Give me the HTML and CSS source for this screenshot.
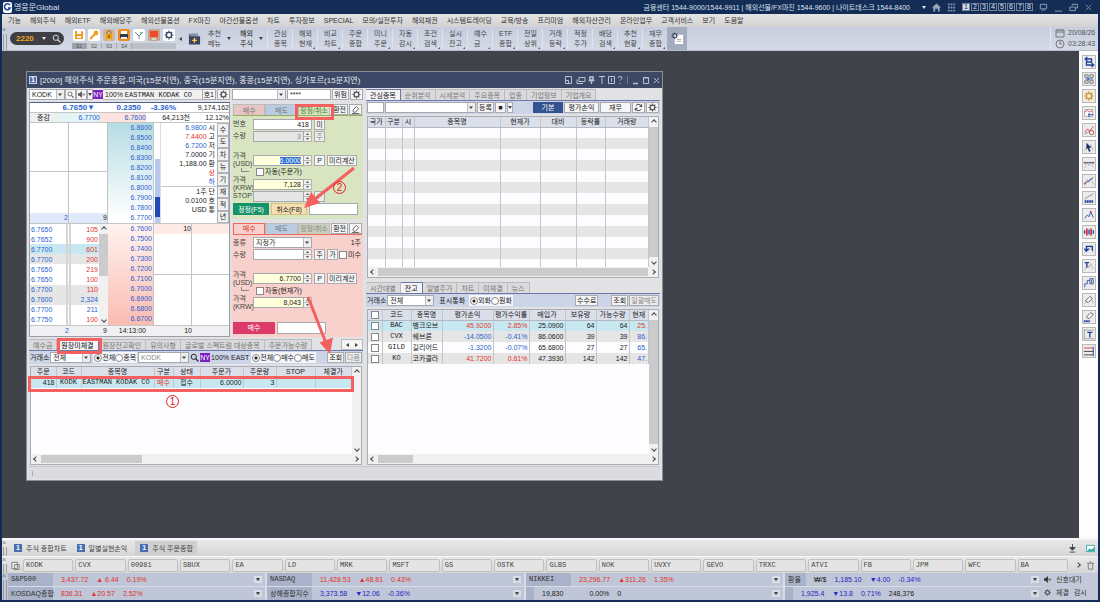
FILE: index.html
```html
<!DOCTYPE html>
<html lang="ko">
<head>
    <meta charset="utf-8">
    <title>영웅문Global</title>
    <link rel="stylesheet" href="styles.css">
</head>
<body>
<svg class="defs" aria-hidden="true">
    <symbol id="search" viewBox="0 0 9 9"><circle cx="3.8" cy="3.8" r="2.6" fill="none" stroke="currentColor"/><path d="M5.8 5.8L8.4 8.4" stroke="currentColor" stroke-width="1.3"/></symbol>
    <symbol id="gear" viewBox="0 0 10 10"><circle cx="5" cy="5" r="2.6" fill="none" stroke="currentColor" stroke-width="1.4"/><path d="M5 .5v1.6M5 7.9v1.6M.5 5h1.6M7.9 5h1.6M1.8 1.8L3 3M7 7l1.2 1.2M1.8 8.2L3 7M7 3l1.2-1.2" stroke="currentColor" stroke-width="1.2"/></symbol>
    <symbol id="speaker" viewBox="0 0 9 9"><path d="M0 3h2l3-3v9l-3-3H0z" fill="currentColor"/><path d="M6.5 3v3M8.3 3.6v2" stroke="currentColor"/></symbol>
    <symbol id="pen" viewBox="0 0 10 10"><path d="M2 6L6 1.5L8.5 4L5 8H3z" fill="#fff" stroke="currentColor"/><path d="M1 9.5h8" stroke="currentColor"/></symbol>
    <symbol id="wave" viewBox="0 0 14 14"><path d="M2 12L5 5L7 9L9 4L12 11" fill="none" stroke="#b5b5b5"/></symbol>
</svg>

<header class="titlebar">
    <svg class="logo" viewBox="0 0 9 11"><rect width="9" height="11" rx="2" fill="#fff"/><path d="M7 3.2A3 3 0 1 0 7.2 6H5" fill="none" stroke="#1b4a9c" stroke-width="1.6"/></svg>
    <h1>영웅문Global</h1>
    <span class="phones">금융센터 1544-9000/1544-9911 | 해외선물/FX마진 1544-9600 | 나이트데스크 1544-8400</span>
    <i class="caret light"></i>
    <svg class="tico" viewBox="0 0 10 10"><path d="M0 5L5 .5L10 5H8.5v4.5h-2V6.500h-3v3h-2V5z" fill="#9aa7bb"/></svg>
    <svg class="tico" viewBox="0 0 10 10"><path d="M1 1.500h8M1 5h8M1 8.500h8" stroke="#8492aa" stroke-width="2" stroke-dasharray="2 1"/></svg>
    <nav class="screens"><a class="on" href="#">1</a><a href="#">2</a><a href="#">3</a><a href="#">4</a><a href="#">5</a><a href="#">6</a><a href="#">7</a><a href="#">8</a></nav>
    <svg class="tico" viewBox="0 0 10 10"><path d="M1.500 1.500h7v5h-7zM3 9l2-2l2 2" fill="none" stroke="#9aa7bb"/></svg>
    <svg class="tico" viewBox="0 0 10 10"><path d="M1 9h8" stroke="#9aa7bb"/></svg>
    <svg class="tico" viewBox="0 0 10 10"><path d="M3.500 3V1.500h6v4H7M1 4.500h6v4H1z" fill="none" stroke="#9aa7bb"/></svg>
    <svg class="tico" viewBox="0 0 10 10"><path d="M2 2l6 6M8 2l-6 6" stroke="#8492aa"/></svg>
</header>

<nav class="menubar">
    <a href="#">기능</a><a href="#">해외주식</a><a href="#">해외ETF</a><a href="#">해외배당주</a><a href="#">해외선물옵션</a><a href="#">FX마진</a><a href="#">야간선물옵션</a><a href="#">차트</a><a href="#">투자정보</a><a href="#">SPECIAL</a><a href="#">모의/실전투자</a><a href="#">해외채권</a><a href="#">시스템트레이딩</a><a href="#">교육/방송</a><a href="#">프리미엄</a><a href="#">해외자산관리</a><a href="#">온라인업무</a><a href="#">고객서비스</a><a href="#">보기</a><a href="#">도움말</a>
</nav>

<div class="toolbar">
    <div class="grip"><span>×</span></div>
    <div class="finder"><input type="text" value="2220" aria-label="화면번호"><i class="caret light"></i><svg class="s9"><use href="#search"/></svg></div>
    <div class="quick">
        <div class="quick-icons">
            <svg viewBox="0 0 12 12"><rect width="12" height="12" rx="2" fill="#fff"/><path d="M2 2h7l1 1v7H2z" fill="#f29a1f"/><path d="M4 2h4v3H4zM4 7h4v2H4z" fill="#fff"/></svg>
            <svg viewBox="0 0 12 12"><rect width="12" height="12" rx="2" fill="#fff"/><path d="M2 10L7 5" stroke="#f29a1f" stroke-width="2"/><circle cx="8" cy="4" r="2.400" fill="#f2a22b"/></svg>
            <svg viewBox="0 0 12 12"><rect width="12" height="12" rx="2" fill="#d9b48e"/><rect x="3" y="5" width="6" height="5" fill="#f0a000"/><path d="M4 5V3.500a2 2 0 0 1 4 0V5" fill="none" stroke="#8b6a30"/><path d="M6 6v3" stroke="#5a3900"/></svg>
            <svg viewBox="0 0 12 12"><rect width="12" height="12" rx="2" fill="#f08a1d"/><path d="M3 2h6v3H3z" fill="#fff"/><path d="M2 5h8v4H2z" fill="#333c4d"/><path d="M3 8h6v2H3z" fill="#eee"/></svg>
            <svg viewBox="0 0 12 12"><rect width="12" height="12" rx="2" fill="#fff"/><path d="M2 3l4 4l4-4M6 7v3" fill="none" stroke="#7e8c91"/><circle cx="8" cy="4" r="1" fill="#55b89d"/></svg>
            <svg viewBox="0 0 12 12"><rect width="12" height="12" rx="2" fill="#cba28e"/><path d="M2 2h8v6H2z" fill="#ee4b28"/><path d="M4 10h4" stroke="#fff"/></svg>
            <svg viewBox="0 0 12 12"><rect width="12" height="12" rx="2" fill="#fff"/><g color="#3d4b68"><use href="#gear" x="1" y="1" width="10" height="10"/></g></svg>
        </div>
        <div class="quick-tabs"><span class="on">S1</span><span>S2</span><span>S3</span><span>S4</span></div>
    </div>
    <i class="caret prev"></i>
    <svg class="folder" viewBox="0 0 14 14"><path d="M1 2h5l1 2h6v9H1z" fill="#3b4660"/><path d="M2 1h9v3H2z" fill="#8592a8"/><path d="M7 6v5M4.500 8.500h5" stroke="#ffd34d" stroke-width="1.500"/></svg>
    <a class="tool wide" href="#">추천<br>메뉴</a><i class="caret"></i>
    <a class="tool wide dark" href="#">해외<br>주식</a><i class="caret"></i>
    <nav class="tools">
        <a class="tool" href="#">관심<br>종목</a><a class="tool sub" href="#">해외<br>현재</a><a class="tool sub" href="#">비교<br>차트</a><a class="tool" href="#">주문<br>종합</a><a class="tool sub" href="#">미니<br>주문</a><a class="tool sub" href="#">자동<br>감시</a><a class="tool sub" href="#">조건<br>검색</a><a class="tool sub" href="#">실시<br>잔고</a><a class="tool sub" href="#">예수<br>금</a><a class="tool sub" href="#">ETF<br>종합</a><a class="tool sub" href="#">전일<br>상위</a><a class="tool sub" href="#">거래<br>등락</a><a class="tool" href="#">적정<br>주가</a><a class="tool sub" href="#">배당<br>검색</a><a class="tool sub" href="#">추천<br>현황</a><a class="tool sub" href="#">재무<br>종합</a>
    </nav>
    <button class="custom" aria-label="툴바 설정"><svg viewBox="0 0 14 14"><path d="M4 3h9v10H4z" fill="#fff"/><path d="M6 8h5M6 10h5" stroke="#aaa"/><g color="#33405e"><use href="#gear" width="8" height="8"/></g></svg></button>
    <div class="clock">
        <span><svg viewBox="0 0 10 10"><path d="M1 2h8v7H1zM1 4h8M3 1v2M7 1v2" fill="none" stroke="#777"/></svg>20/08/26</span>
        <span><svg viewBox="0 0 10 10"><circle cx="5" cy="5" r="4" fill="none" stroke="#777"/><path d="M5 2v3h2" fill="none" stroke="#777"/></svg>03:28:43</span>
    </div>
</div>

<main class="desk">
<div class="workspace">
<section class="window">
    <div class="win-title">
        <span class="badge">1</span>
        <h2>[2000] 해외주식 주문종합-미국(15분지연), 중국(15분지연), 홍콩(15분지연), 싱가포르(15분지연)</h2>
        <svg viewBox="0 0 96 10" class="win-ctl"><g fill="none" stroke="#b9c0cf"><path d="M1.500 1.500h6v7h-6zM1.500 5.500h3v3"/><path d="M15 2.500h6v4h-6zM13 4.500v4h6"/><path d="M25 2h5M26 2v3h3V2M24.500 5.500h6M27.500 6v3" stroke-width="1.500"/><path d="M35 1.500h6M38 1.500V9"/><path d="M44.500 1.500h6v7h-6zM47.500 3v4"/><path d="M54 3q0-1.500 2-1.500t2 1.500q0 1-2 2.500M56 8v1"/><path d="M63.500 1v8" stroke="#6d7891"/><path d="M69 8.500h5" stroke-width="1.500"/><path d="M79.500 2.500h5v6h-5zM79 3h6"/><path d="M90 3l5 5M95 3l-5 5"/></g></svg>
    </div>
    <div class="win-body">
        <div class="col-left">
            <div class="trade">
                <div class="quote">
                    <div class="row search-row">
                        <select class="w36" aria-label="종목코드"><option>KODK</option></select>
                        <button class="sq" aria-label="검색"><svg class="s7"><use href="#search"/></svg></button>
                        <button class="sq" aria-label="소리"><svg class="s7"><use href="#speaker"/></svg></button>
                        <button class="thin" aria-label="소리 목록"><i class="caret"></i></button>
                        <b class="ny">NY</b>
                        <span class="stock">100% <span class="mono">EASTMAN KODAK CO</span></span>
                        <button class="sq">호1</button>
                        <button class="sq" aria-label="설정"><svg class="s9"><use href="#gear"/></svg></button>
                    </div>
                    <div class="board">
                        <div class="sum"><b class="dn c1">6.7650▼</b><b class="dn c2">0.2350</b><b class="dn c3">-3.36%</b><span class="c4">9,174,162</span></div>
                        <div class="sum second"><span class="d1">증감</span><span class="d2 dn">6.7700</span><span class="d3 dn">6.7600</span><span class="d4">64,213천</span><span class="d5">12.12%</span></div>
                        <div class="asks">
                            <div class="blank"><span>2</span></div>
                            <div class="blank"><span class="blk">9</span></div>
                            <ol class="ladder asc"><li>6.8600</li><li>6.8500</li><li>6.8400</li><li>6.8300</li><li>6.8200</li><li>6.8100</li><li>6.8000</li><li>6.7900</li><li>6.7800</li><li>6.7700</li></ol>
                            <div class="gauge"><i></i></div>
                            <div class="info">
                                <p><span class="dn">6.9800</span> 시</p><p><span class="up">7.4400</span> 고</p><p><span class="dn">6.7200</span> 저</p><p>7.0000 기</p><p>1,188.00 환</p><p class="up">상</p><p class="dn">하</p>
                                <p class="line">1주 단</p><p>0.0100 호</p><p>USD 통</p>
                            </div>
                            <nav class="side"><button>수</button><button>도</button><button>차</button><button>뉴</button><button>기</button><button>재</button><button>적</button><button>년</button></nav>
                        </div>
                        <div class="bids">
                            <table class="ticks">
                                <tr><td>6.7650</td><td class="up">105</td></tr>
                                <tr><td>6.7652</td><td class="up">900</td></tr>
                                <tr class="hi"><td>6.7700</td><td class="up">601</td></tr>
                                <tr class="gr"><td>6.7700</td><td class="up">200</td></tr>
                                <tr><td>6.7650</td><td class="up">219</td></tr>
                                <tr><td>6.7650</td><td class="up">100</td></tr>
                                <tr class="gr"><td>6.7700</td><td class="up">110</td></tr>
                                <tr class="gr"><td>6.7600</td><td>2,324</td></tr>
                                <tr><td>6.7700</td><td>211</td></tr>
                                <tr><td>6.7750</td><td class="up">100</td></tr>
                            </table>
                            <div class="vbar"><i class="arr u"></i><i class="thumb half"></i><i class="arr d"></i></div>
                            <ol class="ladder desc"><li>6.7600</li><li>6.7500</li><li>6.7400</li><li>6.7300</li><li>6.7200</li><li>6.7100</li><li>6.7000</li><li>6.6900</li><li>6.6800</li><li>6.6700</li></ol>
                            <div class="qty"><span>10</span></div>
                            <div class="qty rest"><span></span></div>
                        </div>
                        <div class="total"><span class="t1 dn">2</span><span class="t2">9</span><span class="t3">14:13:00</span><span class="t4">10</span></div>
                    </div>
                </div>

                <div class="order">
                    <div class="row search-row">
                        <select class="w54" aria-label="계좌"><option></option></select>
                        <input class="grow" type="text" value="****" aria-label="비밀번호">
                        <button class="sq">위험</button>
                        <button class="sq" aria-label="설정"><svg class="s9"><use href="#gear"/></svg></button>
                    </div>
                    <form class="ticket green">
                        <div class="ttabs"><button type="button" class="buy">매수</button><button type="button" class="sell">매도</button><button type="button" class="mod">정정/취소</button><button type="button" class="sq">환전</button><button type="button" class="sq" aria-label="지우기"><svg class="s9"><use href="#pen"/></svg></button></div>
                        <div class="frow"><label for="no">번호</label><input id="no" class="w59" type="text" value="418"><button type="button" class="sq">미</button></div>
                        <div class="frow"><label for="q1">수량</label><input id="q1" class="w50 off" type="text" value="3"><i class="spin"></i><button type="button" class="sq dim">주</button></div>
                        <div class="frow space"></div>
                        <div class="frow"><label for="p1">가격<br>(USD)</label><span class="field w50 yel"><mark>6.0000</mark></span><i class="spin"></i><button type="button" class="sq" id="p1">P</button><button type="button" class="sq">미리계산</button></div>
                        <div class="frow chk"><i class="hook"></i><input id="a1" type="checkbox"><label class="free" for="a1">자동(주문가)</label></div>
                        <div class="frow"><label for="k1">가격<br>(KRW)</label><input id="k1" class="w50 yel" type="text" value="7,128"><i class="spin"></i></div>
                        <div class="frow"><label for="s1">STOP</label><input id="s1" class="w50 off" type="text"><i class="spin"></i><button type="button" class="sq dim">P</button></div>
                        <div class="frow acts"><button type="button" class="fix">정정(F5)</button><button type="button" class="cancel">취소(F8)</button><input class="w48" type="text" aria-label="메모"></div>
                    </form>
                    <form class="ticket pink">
                        <div class="ttabs"><button type="button" class="buy cur">매수</button><button type="button" class="sell">매도</button><button type="button" class="mod gray">정정/취소</button><button type="button" class="sq">환전</button><button type="button" class="sq" aria-label="지우기"><svg class="s9"><use href="#pen"/></svg></button></div>
                        <div class="frow"><label for="kind">종류</label><select id="kind" class="w59"><option>지정가</option></select><span class="unit">1주</span></div>
                        <div class="frow"><label for="q2">수량</label><input id="q2" class="w50" type="text"><i class="spin"></i><button type="button" class="sq">주</button><button type="button" class="sq">가</button><input id="ms" type="checkbox"><label class="free" for="ms">미수</label></div>
                        <div class="frow space"></div>
                        <div class="frow"><label for="p2">가격<br>(USD)</label><input id="p2" class="w50 yel" type="text" value="6.7700"><i class="spin"></i><button type="button" class="sq">P</button><button type="button" class="sq">미리계산</button></div>
                        <div class="frow chk"><i class="hook"></i><input id="a2" type="checkbox"><label class="free" for="a2">자동(현재가)</label></div>
                        <div class="frow"><label for="k2">가격<br>(KRW)</label><input id="k2" class="w50 yel" type="text" value="8,043"><i class="spin"></i></div>
                        <div class="frow space"></div>
                        <div class="frow acts"><button type="button" class="submit">매수</button><input class="w48" type="text" aria-label="메모"></div>
                    </form>
                </div>
            </div>

            <div class="panel pending">
                <nav class="tabs"><button>예수금</button><button class="cur">원장미체결</button><button>원장잔고확인</button><button>유의사항</button><button>글로벌 스펙트럼 대상종목</button><button>주문가능수량</button><span class="pager"><i class="caret prev"></i><i class="caret next"></i></span></nav>
                <div class="filter">
                    <label for="ex1">거래소</label><select id="ex1" class="w41"><option>전체</option></select>
                    <span class="radios"><input type="radio" name="r1" id="r1a" checked><label for="r1a">전체</label><input type="radio" name="r1" id="r1b"><label for="r1b">종목</label></span>
                    <select class="w50 ghost" aria-label="종목"><option>KODK</option></select>
                    <svg class="s9"><use href="#search"/></svg><b class="ny">NY</b><span>100% EAST</span>
                    <span class="radios"><input type="radio" name="r2" id="r2a" checked><label for="r2a">전체</label><input type="radio" name="r2" id="r2b"><label for="r2b">매수</label><input type="radio" name="r2" id="r2c"><label for="r2c">매도</label></span>
                    <button class="sq push">조회</button><button class="sq dim">다음</button>
                </div>
                <div class="grid-box">
                    <div class="grid-main">
                        <table class="list">
                            <colgroup><col class="k25"><col class="k25"><col class="k73"><col class="k18"><col class="k27"><col class="k43"><col class="k33"><col class="k39"><col></colgroup>
                            <thead><tr><th>주문</th><th>코드</th><th>종목명</th><th>구분</th><th>상태</th><th>주문가</th><th>주문량</th><th>STOP</th><th>체결가</th></tr></thead>
                            <tbody><tr class="hi"><td class="num">418</td><td class="mono ctr">KODK</td><td class="mono">EASTMAN KODAK CO</td><td class="up ctr">매수</td><td class="ctr">접수</td><td class="num">6.0000</td><td class="num">3</td><td></td><td></td></tr></tbody>
                        </table>
                    </div>
                    <div class="vbar"><i class="arr u"></i><i class="arr d"></i></div>
                    <div class="hbar"><i class="arr l"></i><i class="thumb h100"></i><i class="arr r"></i></div>
                </div>
            </div>
        </div>

        <div class="col-right">
            <div class="panel watch">
                <nav class="tabs"><button class="cur">관심종목</button><button>순위분석</button><button>시세분석</button><button>주요종목</button><button>업종</button><button>기업정보</button><button>기업개요</button></nav>
                <div class="filter">
                    <input class="w17" type="text" aria-label="그룹번호"><select class="w90" aria-label="관심그룹"><option></option></select><button class="sq">등록</button><button class="sq">■</button><button class="thin" aria-label="목록"><i class="caret"></i></button>
                    <button class="sq primary push">기본</button><button class="sq w34">평가손익</button><button class="sq w30">재무</button><button class="sq" aria-label="새로고침"><svg class="s9" viewBox="0 0 10 10"><path d="M8.500 4A3.600 3.600 0 0 0 2 3.200M1.500 6A3.600 3.600 0 0 0 8 6.800M8.500 1.500V4H6M1.500 8.500V6H4" fill="none" stroke="#333"/></svg></button><button class="sq" aria-label="설정"><svg class="s9"><use href="#gear"/></svg></button>
                </div>
                <div class="grid-box">
                    <div class="grid-main">
                        <table class="list tall">
                            <colgroup><col class="k17"><col class="k17"><col class="k12"><col class="k86"><col class="k40"><col class="k36"><col class="k29"><col></colgroup>
                            <thead><tr><th>국가</th><th>구분</th><th>시</th><th>종목명</th><th>현재가</th><th>대비</th><th>등락률</th><th>거래량</th></tr></thead>
                            <tbody>
                                <tr><td></td><td></td><td></td><td></td><td></td><td></td><td></td><td></td></tr>
                                <tr><td></td><td></td><td></td><td></td><td></td><td></td><td></td><td></td></tr>
                                <tr><td></td><td></td><td></td><td></td><td></td><td></td><td></td><td></td></tr>
                                <tr><td></td><td></td><td></td><td></td><td></td><td></td><td></td><td></td></tr>
                                <tr><td></td><td></td><td></td><td></td><td></td><td></td><td></td><td></td></tr>
                                <tr><td></td><td></td><td></td><td></td><td></td><td></td><td></td><td></td></tr>
                                <tr><td></td><td></td><td></td><td></td><td></td><td></td><td></td><td></td></tr>
                                <tr><td></td><td></td><td></td><td></td><td></td><td></td><td></td><td></td></tr>
                                <tr><td></td><td></td><td></td><td></td><td></td><td></td><td></td><td></td></tr>
                                <tr><td></td><td></td><td></td><td></td><td></td><td></td><td></td><td></td></tr>
                                <tr><td></td><td></td><td></td><td></td><td></td><td></td><td></td><td></td></tr>
                                <tr><td></td><td></td><td></td><td></td><td></td><td></td><td></td><td></td></tr>
                                <tr><td></td><td></td><td></td><td></td><td></td><td></td><td></td><td></td></tr>
                            </tbody>
                        </table>
                    </div>
                    <div class="vbar"><i class="arr u"></i><i class="thumb full"></i><i class="arr d"></i></div>
                    <div class="hbar"><i class="arr l"></i><i class="thumb full"></i><i class="arr r"></i></div>
                </div>
            </div>

            <div class="panel balance">
                <nav class="tabs"><button>시간대별</button><button class="cur">잔고</button><button>일별주가</button><button>차트</button><button>미체결</button><button>뉴스</button></nav>
                <div class="filter">
                    <label for="ex2">거래소</label><select id="ex2" class="w45"><option>전체</option></select>
                    <span class="cap">표시통화</span>
                    <span class="radios"><input type="radio" name="r3" id="r3a" checked><label for="r3a">외화</label><input type="radio" name="r3" id="r3b"><label for="r3b">원화</label></span>
                    <button class="sq push">수수료</button><button class="sq ask">조회</button><button class="sq dim">일괄매도</button>
                </div>
                <div class="grid-box">
                    <div class="grid-main">
                        <table class="list striped">
                            <colgroup><col class="k13"><col class="k29"><col class="k31"><col class="k51"><col class="k36"><col class="k36"><col class="k31"><col class="k33"><col></colgroup>
                            <thead><tr><th><input type="checkbox" aria-label="전체 선택"></th><th>코드</th><th>종목명</th><th>평가손익</th><th>평가수익률</th><th>매입가</th><th>보유량</th><th>가능수량</th><th>현재</th></tr></thead>
                            <tbody>
                                <tr class="hi"><td><input type="checkbox" aria-label="BAC"></td><td class="mono ctr">BAC</td><td>뱅크오브</td><td class="num up">45.9200</td><td class="num up">2.85%</td><td class="num">25.0900</td><td class="num">64</td><td class="num">64</td><td class="num up">25.</td></tr>
                                <tr><td><input type="checkbox" aria-label="CVX"></td><td class="mono ctr">CVX</td><td>쉐브론</td><td class="num dn">-14.0500</td><td class="num dn">-0.41%</td><td class="num">86.0600</td><td class="num">39</td><td class="num">39</td><td class="num dn">86.</td></tr>
                                <tr><td><input type="checkbox" aria-label="GILD"></td><td class="mono ctr">GILD</td><td>길리어드</td><td class="num dn">-1.3200</td><td class="num dn">-0.07%</td><td class="num">65.6800</td><td class="num">27</td><td class="num">27</td><td class="num dn">65.</td></tr>
                                <tr><td><input type="checkbox" aria-label="KO"></td><td class="mono ctr">KO</td><td>코카콜라</td><td class="num up">41.7200</td><td class="num up">0.61%</td><td class="num">47.3930</td><td class="num">142</td><td class="num">142</td><td class="num dn">47.</td></tr>
                            </tbody>
                        </table>
                    </div>
                    <div class="vbar"><i class="arr u"></i><i class="thumb full"></i><i class="arr d"></i></div>
                    <div class="hbar"><i class="arr l"></i><i class="thumb h35"></i><i class="arr r"></i></div>
                </div>
            </div>
        </div>
    </div>
    <div class="win-status"></div>

    <svg class="marks" viewBox="0 0 637 410" aria-hidden="true">
        <g fill="none" stroke="#f4605f" stroke-width="3"><path d="M269.500 33.500h36v13h-36zM31.500 267.500h42v13h-42zM2.500 305.500h323v13h-323z"/><path d="M327 96L288 127M281 225L299 271"/></g>
        <path d="M277 136L284 120L293 131zM303 282L292.500 270.500L306 265.500z" fill="#f4605f"/>
    </svg>
    <span class="step one">1</span><span class="step two">2</span>
</section>
</div>

<aside class="drawbar">
    <button aria-label="이동"><svg viewBox="0 0 14 14"><path d="M3 3.500h7v3.500H4v3.500h8M5 1L2.500 3.500L5 6M10 8l2.500 2.500L10 13" fill="none" stroke="#1d3f9c" stroke-width="1.500"/></svg></button>
    <button aria-label="정렬"><svg viewBox="0 0 14 14"><path d="M2 2h4v3H2zM8 2h4v3H8zM2 9h4v3H2zM8 9h4v3H8z" fill="#ddd" stroke="#777"/><path d="M3 7h9M6 5v4" stroke="#1d3f9c"/></svg></button>
    <button class="gold" aria-label="설정"><svg viewBox="0 0 14 14"><use href="#gear" x="1" y="1" width="12" height="12"/></svg></button>
    <button aria-label="수식"><svg viewBox="0 0 14 14"><path d="M2 3h9v8H2z" fill="#fff" stroke="#aaa"/><path d="M2 6l3-2l3 2l3-2" stroke="#d44" fill="none"/><path d="M6 9h6M7 7v5" stroke="#1d3f9c"/></svg></button>
    <button aria-label="지표 추가"><svg viewBox="0 0 14 14"><path d="M2 10l3-4l3 2l4-5" fill="none" stroke="#d33"/><path d="M2 12l5-3" stroke="#888"/><circle cx="10" cy="10" r="2.500" fill="#fff" stroke="#a33"/></svg></button>
    <button aria-label="선택"><svg viewBox="0 0 14 14"><use href="#wave"/><path d="M4 2l6 6H7l2 4l-2 .5l-1.500-4L4 10z" fill="#1c2e6b"/></svg></button>
    <button aria-label="수평선"><svg viewBox="0 0 14 14"><use href="#wave"/><path d="M1 5.500h12" stroke="#1d3f9c"/><circle cx="2" cy="5.500" r="1" fill="#d33"/><circle cx="12" cy="5.500" r="1" fill="#d33"/></svg></button>
    <button aria-label="추세선"><svg viewBox="0 0 14 14"><use href="#wave"/><path d="M2 10L12 3" stroke="#1d3f9c"/><circle cx="2" cy="10" r="1" fill="#d33"/></svg></button>
    <button aria-label="자동추세"><svg viewBox="0 0 14 14"><path d="M2 8L12 2" stroke="#888"/><path d="M2 11h10" stroke="#1d3f9c" stroke-width="3" stroke-dasharray="2 .6"/></svg></button>
    <button aria-label="파동"><svg viewBox="0 0 14 14"><path d="M2 11L5 7L7 9L9 3L12 10" fill="none" stroke="#2a49a8"/><circle cx="9" cy="3" r="1" fill="#d33"/></svg></button>
    <button aria-label="봉"><svg viewBox="0 0 14 14"><path d="M2 5v4M12 5v4M7 4v6" stroke="#1d3f9c" stroke-width="1.500"/><path d="M4.500 3v8M9.500 3v8" stroke="#d33" stroke-width="2"/></svg></button>
    <button aria-label="되돌리기"><svg viewBox="0 0 14 14"><use href="#wave"/><path d="M4 9V4h7v5M1.500 6.500L4 9.500L6.500 6.500" fill="none" stroke="#1d3f9c" stroke-width="1.500"/></svg></button>
    <button aria-label="문자"><svg viewBox="0 0 14 14"><use href="#wave"/><path d="M2 3h5M4.500 3v6" stroke="#1d3f9c" stroke-width="1.500"/></svg></button>
    <button aria-label="구간"><svg viewBox="0 0 14 14"><path d="M2 12V8h3V4h3M8 2h4v6H8z" fill="none" stroke="#2a49a8"/><path d="M10 3v4" stroke="#555"/></svg></button>
    <button aria-label="지우개"><svg viewBox="0 0 14 14"><use href="#wave"/><path d="M3 8l5-5l3 2l-5 5z" fill="#fff" stroke="#555"/></svg></button>
    <button aria-label="전체 지우기"><svg viewBox="0 0 14 14"><path d="M4 7l5-5l3 2l-5 5z" fill="#fff" stroke="#555"/><path d="M1 12h7" stroke="#1d3f9c" stroke-width="2.500" stroke-dasharray="2 .6"/></svg></button>
    <button aria-label="표"><svg viewBox="0 0 14 14"><path d="M1 2.500h12M1 12.500h12M1.500 2v11" stroke="#999"/><path d="M5 5h6M8 5v6" stroke="#1d3f9c" stroke-width="1.500"/></svg></button>
    <button aria-label="분할선"><svg viewBox="0 0 14 14"><path d="M1 3.500h11" stroke="#d33"/><path d="M1 7.500h11M1 11.500h11" stroke="#333"/><path d="M12 2v11" stroke="#1d3f9c"/></svg></button>
</aside>
</main>

<div class="bar opened">
    <div class="grip"><span>×</span></div>
    <a href="#"><span class="badge">1</span>주식 종합차트</a><a href="#"><span class="badge">1</span>일별실현손익</a><a class="on" href="#"><span class="badge">1</span>주식 주문종합</a>
    <svg class="tico push" viewBox="0 0 10 10"><path d="M5 0v5M2 4l3 3l3-3zM2 9h6" fill="#444" stroke="#444"/></svg>
    <svg class="tico" viewBox="0 0 10 10"><path d="M.5 1.500h9v7h-9z" fill="#fff" stroke="#3aa"/><path d="M1 8l3-3l2 1l3-2v4z" fill="#2fb0a0"/></svg>
</div>

<div class="bar tickers">
    <div class="grip"><span>×</span></div>
    <svg class="tico" viewBox="0 0 10 10"><path d="M1 1.500h6v7H1zM4 4h5v5.500H4z" fill="#eee" stroke="#777"/></svg>
    <nav><a href="#">KODK</a><a href="#">CVX</a><a href="#">00981</a><a href="#">SBUX</a><a href="#">EA</a><a href="#">LD</a><a href="#">MRK</a><a href="#">MSFT</a><a href="#">GS</a><a href="#">OSTK</a><a href="#">GLBS</a><a href="#">NOK</a><a href="#">UVXY</a><a href="#">GEVO</a><a href="#">TRXC</a><a href="#">ATVI</a><a href="#">FB</a><a href="#">JPM</a><a href="#">WFC</a><a href="#">BA</a></nav>
    <i class="arr r"></i>
    <svg class="tico" viewBox="0 0 10 10"><path d="M1 2.500h8M2.500 2.500v6.500h5V2.500M4 1h2" fill="none" stroke="#777"/></svg>
</div>

<footer class="indices">
    <div class="grip"><span>×</span></div>
    <div class="index-grid">
        <div class="idx up"><span class="name mono">S&amp;P500</span><span>3,437.72</span><span>▲ 6.44</span><span>0.19%</span><i class="caret"></i></div>
        <div class="idx up"><span class="name mono">NASDAQ</span><span>11,428.53</span><span>▲48.81</span><span>0.43%</span><i class="caret"></i></div>
        <div class="idx up"><span class="name mono">NIKKEI</span><span>23,296.77</span><span>▲311.26</span><span>1.35%</span><i class="caret"></i></div>
        <div class="idx fall"><span class="name short">환율</span><span class="blk">₩/$</span><span>1,185.10</span><span>▼4.00</span><span>-0.34%</span><i class="caret"></i></div>
        <div class="idx up"><span class="name">KOSDAQ종합</span><span>836.31</span><span>▲20.57</span><span>2.52%</span><i class="caret"></i></div>
        <div class="idx fall"><span class="name">상해종합지수</span><span>3,373.58</span><span>▼12.06</span><span>-0.36%</span><i class="caret"></i></div>
        <div class="idx far"><span class="name none"></span><span>19,830</span><span class="mid">0.00%</span><span>0</span><i class="caret"></i></div>
        <div class="idx fall"><span class="name none"></span><span>1,925.4</span><span>▼13.8</span><span>0.71%</span><span class="blk">248,376</span><i class="caret"></i></div>
    </div>
    <div class="signals">
        <a href="#"><svg class="s7"><use href="#speaker"/></svg>신호대기</a>
        <div><svg class="s7"><use href="#gear"/></svg><a href="#">체결</a><a href="#">감시</a></div>
    </div>
</footer>
</body>
</html>
```
FILE: styles.css
```css
*{ box-sizing: border-box; }

html,body{
    margin: 0;
    padding: 0;
    height: 100%;
}

body{
    display: flex;
    flex-direction: column;
    padding: 0 2px 2px;
    background: #142d57;
    color: #222;
    font: 7px/9px "Liberation Sans", "Noto Sans CJK KR", sans-serif;
    overflow: hidden;
    cursor: default;
}

h1,h2,p,ol{ margin: 0; padding: 0; font-size: inherit; font-weight: normal; list-style: none; }
a{ color: inherit; text-decoration: none; }
i{ font-style: normal; }
svg{ display: block; flex: none; }
button,input,select{
    margin: 0;
    padding: 0;
    font: inherit;
    color: inherit;
    border-radius: 0;
    outline: none;
}
.defs{ position: absolute; width: 0; height: 0; }
.s9{ width: 9px; height: 9px; }
.s7{ width: 7px; height: 7px; }
.up{ color: #e0352b; }
.dn{ color: #2b5fd0; }
.blk{ color: #222 !important; }
.mono{ font-family: "Liberation Mono", "Noto Sans CJK KR", monospace; }
.push{ margin-left: auto !important; }

.caret{
    flex: none;
    width: 0;
    height: 0;
    border: 2px solid transparent;
    border-top: 3px solid #444;
    border-bottom: 0;
}
.caret.light{ border-top-color: #e4e8ee; }
.caret.prev{ border: 2px solid transparent; border-right: 3px solid #444; border-left: 0; }
.caret.next{ border: 2px solid transparent; border-left: 3px solid #444; border-right: 0; }

.grip{
    flex: none;
    width: 6px;
    align-self: stretch;
    line-height: 6px;
    color: #777;
    background: linear-gradient(#999,#999) 1px 7px / 1px 100% no-repeat, linear-gradient(#999,#999) 4px 7px / 1px 100% no-repeat;
}

/* top bars */
.titlebar{
    flex: none;
    display: flex;
    align-items: center;
    gap: 6px;
    height: 14px;
    padding: 0 5px 0 1px;
    color: #dce2ec;
}
.titlebar .logo{ width: 9px; height: 11px; }
.titlebar h1{ margin-left: -4px; font-size: 8px; }
.phones{ margin-left: auto; padding-right: 6px; }
.tico{ width: 9px; height: 9px; }
.screens{ display: flex; gap: 1px; }
.screens a{
    width: 8px;
    height: 8px;
    border: 1px solid #76849d;
    line-height: 6px;
    text-align: center;
}
.screens .on{ background: #d5dae3; color: #142d57; }

.menubar{
    flex: none;
    display: flex;
    align-items: center;
    gap: 9px;
    height: 13px;
    padding-left: 6px;
    background: linear-gradient(#e4e4e4,#d2d2d2);
    color: #333;
    white-space: nowrap;
}

.toolbar{
    flex: none;
    display: flex;
    align-items: center;
    height: 24px;
    background: linear-gradient(#c6cddd,#d5dae6);
    border-bottom: 1px solid #b9bfca;
    color: #444;
}
.finder{
    display: flex;
    align-items: center;
    gap: 6px;
    width: 54px;
    height: 13px;
    margin-left: 2px;
    padding-left: 4px;
    border-radius: 7px;
    background: #3d3f45;
    color: #ddd;
}
.finder input[type=text]{
    width: 22px;
    border: 0;
    background: none;
    color: #f5a623;
    font-weight: bold;
    font-size: 8px;
}
.quick{ margin-left: 8px; width: 104px; }
.quick-icons{ display: flex; gap: 3px; padding-left: 1px; }
.quick-icons svg{ width: 12px; height: 12px; }
.quick-tabs{
    display: flex;
    margin-top: 2px;
    background: #bcc0c8;
    color: #555;
    font-size: 5px;
    line-height: 6px;
}
.quick-tabs span{ width: 15px; text-align: center; border-right: 1px solid #aaa; background: #c9ccd4; }
.quick-tabs .on{ background: #9ea2ac; }
.toolbar > .prev{ margin: 0 6px 0 3px; }
.folder{ width: 13px; height: 14px; }
.tool{
    position: relative;
    width: 25px;
    line-height: 10px;
    padding-left: 6px;
    border-left: 1px solid #dfe3ec;
    white-space: nowrap;
}
.tool.wide{ width: 22px; border: 0; padding-left: 7px; margin-right: 4px; }
.tool.wide.dark{ color: #111; margin-left: 2px; }
.tool.sub::after{
    content: "";
    position: absolute;
    right: 2px;
    bottom: 0;
    border: 1px solid transparent;
    border-right-color: #555;
    border-bottom-color: #555;
}
.tools{ display: flex; margin-left: 4px; }
.custom{
    display: grid;
    place-items: center;
    width: 20px;
    height: 23px;
    border: 0;
    background: #a3adbf;
}
.custom svg{ width: 13px; height: 13px; }
.clock{ margin-left: auto; width: 48px; height: 23px; border-left: 1px solid #e8ebf1; color: #555; }
.clock span{ display: flex; align-items: center; gap: 3px; height: 11px; padding-left: 4px; }
.clock svg{ width: 10px; height: 10px; }

/* desktop */
.desk{ flex: 1; display: flex; min-height: 0; }
.workspace{ position: relative; flex: 1; background: #40434a; }
.drawbar{
    display: flex;
    flex-direction: column;
    align-items: center;
    gap: 3px;
    width: 19px;
    padding-top: 4px;
    background: #fdfdfd;
}
.drawbar button{ width: 14px; height: 14px; border: 1px solid #b9b9b9; background: #ececec; }
.drawbar svg{ width: 12px; height: 12px; }
.drawbar .gold{ color: #d39a2a; }

.window{
    position: absolute;
    left: 24px;
    top: 20px;
    display: flex;
    flex-direction: column;
    width: 637px;
    height: 410px;
    border: 1px solid #8a8d94;
    background: #e2e2e4;
}
.win-title{
    flex: none;
    display: flex;
    align-items: center;
    height: 16px;
    padding: 0 2px;
    background: #3c4866;
    color: #e6e9ef;
}
.win-title h2{ margin-left: 3px; font-size: 8px; }
.win-ctl{ width: 96px; height: 10px; margin-left: auto; }
.badge{
    flex: none;
    width: 8px;
    height: 8px;
    background: #4a6cb3;
    color: #fff;
    font-weight: bold;
    line-height: 8px;
    text-align: center;
}
.win-title .badge{ border: 1px solid #cfd6e6; line-height: 6px; }
.win-body{ flex: 1; display: flex; gap: 3px; min-height: 0; padding: 1px 2px; }
.col-left{ display: flex; flex-direction: column; gap: 2px; width: 334px; }
.col-right{ flex: 1; display: flex; flex-direction: column; gap: 4px; min-width: 0; }
.win-status{
    height: 13px;
    margin: 0 2px 1px;
    background: linear-gradient(#aaa,#aaa) 3px 4px / 1px 5px no-repeat #dcdce0;
    border-top: 1px solid #c8c8cc;
}

/* small controls */
.sq,.thin{
    display: flex;
    align-items: center;
    justify-content: center;
    flex: none;
    min-width: 11px;
    height: 11px;
    padding: 0 1px;
    border: 1px solid #a9a9ae;
    background: #f6f6f6;
    color: #222;
    white-space: nowrap;
}
.sq svg{ color: #555; }
.thin{ min-width: 6px; padding: 0; }
.dim{ color: #888; background: #ececec; }
.primary{ width: 30px; background: #33528f; border-color: #33528f; color: #fff; }
input[type=text],select,.field{
    height: 11px;
    border: 1px solid #a5a8ae;
    background: #fff;
    padding: 0 2px;
    min-width: 0;
}
select{
    appearance: none;
    padding-right: 8px;
    line-height: 9px;
    background: url("data:image/svg+xml,%3Csvg xmlns='http://www.w3.org/2000/svg' width='8' height='9'%3E%3Cpath d='M0 0h8v9H0z' fill='%23eee'/%3E%3Cpath d='M.5 0v9' stroke='%23bbb'/%3E%3Cpath d='M2 3.500h4L4 6z' fill='%23444'/%3E%3C/svg%3E") right center no-repeat #fff;
}
input[type=checkbox],input[type=radio]{
    appearance: none;
    flex: none;
    display: block;
    width: 8px;
    height: 8px;
    border: 1px solid #888;
    background: #fff;
}
input[type=radio]{ border-radius: 50%; }
input[type=radio]:checked{ background: radial-gradient(#222 0 1px,#fff 2px); }
.w17{ width: 17px; } .w30{ width: 31px; } .w34{ width: 35px; } .w36{ width: 36px; }
.w41{ width: 41px; } .w45{ width: 47px; } .w48{ width: 49px; } .w50{ width: 51px; }
.w54{ width: 54px; } .w59{ width: 59px; } .w90{ width: 91px; }
.grow{ flex: 1; }
.ny{ flex: none; width: 10px; height: 9px; background: #7d1fc0; color: #fff; text-align: center; font-weight: normal; }
.row{ display: flex; align-items: center; gap: 1px; }
.search-row{ height: 11px; }

/* quote board */
.trade{ display: flex; gap: 2px; height: 248px; }
.quote{ display: flex; flex-direction: column; gap: 2px; width: 201px; }
.quote .search-row{ gap: 0; }
.quote .search-row .sq:nth-last-child(2){ margin-right: 1px; }
.stock{
    flex: 1;
    height: 11px;
    padding-left: 2px;
    overflow: hidden;
    white-space: nowrap;
    background: #f1f1f1;
    border: 1px solid #b9b9bd;
    border-width: 1px 0;
}
.board{
    flex: 1;
    display: flex;
    flex-direction: column;
    border: 1px solid #9a9da5;
    border-top-color: #56618a;
    background: #fff;
}
.sum{ display: flex; height: 10px; line-height: 9px; text-align: right; border-bottom: 1px solid #c5c5c5; }
.c1,.c2,.c3{ font-size: 8px; }
.c1{ width: 65px; } .c2{ width: 46px; } .c3{ width: 35px; } .c4{ flex: 1; }
.d1{ width: 27px; background: #eef0f0; text-align: center; }
.d2{ width: 43px; background: #e3f3f6; }
.d3{ width: 46px; background: #fde3e0; }
.d4{ width: 44px; } .d5{ flex: 1; }
.asks{ display: flex; height: 100px; }
.blank{
    display: flex;
    align-items: flex-end;
    width: 39px;
    border-right: 1px solid #c5c5c5;
    background: linear-gradient(#c5c5c5,#c5c5c5) 0 48px / 100% 1px no-repeat;
    text-align: right;
    color: #2b5fd0;
}
.blank span{ flex: 1; background: #dfe9fb; line-height: 10px; }
.ladder{ width: 46px; color: #2b5fd0; text-align: right; line-height: 10px; padding-right: 1px; border-right: 1px solid #c5c5c5; }
.ladder.asc{ background: linear-gradient(#b5dce3,#fff 95%); }
.ladder.desc{ background: linear-gradient(#fff3f0,#f9bcb1); }
.ladder li{ height: 10px; }
.gauge{ width: 6px; padding: 36px 0 0 1px; }
.gauge i{ display: block; height: 64px; background: linear-gradient(#b7c8ee 0 38px,#2048b8 38px 58px,#b7c8ee 58px); }
.info{ flex: 1; border-left: 1px solid #ddd; text-align: right; padding-right: 2px; }
.info p{ line-height: 9px; }
.info .line{ margin: 0 -2px 0 0; padding-right: 2px; border-top: 1px solid #c5c5c5; }
.side{ display: flex; flex-direction: column; width: 12px; }
.side button{ flex: 1; border: 1px solid #b2b2b6; background: #f0f0f0; min-height: 0; }
.bids{ flex: 1; display: flex; border-top: 1px solid #c5c5c5; }
.ticks{
    width: 69px;
    border-collapse: collapse;
    color: #2b5fd0;
    background: #fff;
}
.ticks td{ padding: 0 1px; height: 10px; line-height: 9px; }
.ticks td:last-child{ text-align: right; border-left: 5px double #d5d5d5; }
.ticks tr > td:first-child{ width: 38px; }
.ticks .hi{ background: #c8e8f1; }
.ticks .gr{ background: #e6e6e6; }
.qty{
    width: 38px;
    border-right: 1px solid #c5c5c5;
    background: linear-gradient(#c5c5c5,#c5c5c5) 0 50px / 100% 1px no-repeat;
    text-align: right;
}
.qty span{ display: block; height: 10px; background: #fdeae6; }
.rest{ flex: 1; border: 0; }
.total{ display: flex; height: 11px; border-top: 1px solid #c5c5c5; background: #f0f0f2; text-align: right; }
.t1{ width: 39px; } .t2{ width: 38px; } .t3{ width: 39px; } .t4{ width: 46px; }

/* scroll bars */
.vbar{
    display: flex;
    flex-direction: column;
    justify-content: space-between;
    align-items: center;
    width: 9px;
    background: #f1f1f1;
}
.vbar .thumb{ width: 9px; background: #cbcbcb; }
.vbar .half{ height: 42px; margin-bottom: auto; }
.thumb.full{ flex: 1; }
.hbar{
    grid-column: 1 / 3;
    display: flex;
    align-items: center;
    justify-content: space-between;
    height: 10px;
    background: #f1f1f1;
}
.hbar .thumb{ height: 8px; background: #cbcbcb; }
.h100{ width: 101px; margin-right: auto; }
.h35{ width: 35px; margin-right: auto; }
.arr{ flex: none; width: 10px; height: 10px; display: grid; place-items: center; }
.arr::before{ content: ""; box-sizing: border-box; width: 4px; height: 4px; border: solid #444; border-width: 1px 1px 0 0; }
.arr.u::before{ transform: rotate(-45deg); }
.arr.d::before{ transform: rotate(135deg); }
.arr.l::before{ transform: rotate(-135deg); }
.arr.r::before{ transform: rotate(45deg); }

/* order tickets */
.order{ display: flex; flex-direction: column; gap: 4px; flex: 1; min-width: 0; }
.ticket{ flex: 1; padding: 0 1px; }
.green{ background: #d9e4c1; }
.pink{ background: #f8d0cc; }
.ttabs{ display: flex; align-items: flex-end; height: 12px; margin-bottom: 2px; background: #e2e2e4; border-bottom: 1px solid #8fae62; }
.pink .ttabs{ border-color: #ee6a5f; }
.ttabs button{ height: 11px; }
.ttabs .buy,.ttabs .sell,.ttabs .mod{ width: 33px; border: 1px solid #bbb; border-bottom: 0; background: #e8c4c2; color: #777; white-space: nowrap; padding: 0; }
.ttabs .sell{ background: #b9cde2; }
.ttabs .mod{ background: #d9e4c1; color: #46812c; }
.ttabs .mod.gray{ background: #c9cfbb; color: #888; }
.ttabs .cur{ background: #f8d0cc; color: #e0352b; border-color: #ee6a5f; }
.ttabs .sq{ margin-left: 1px; }
.frow{ display: flex; align-items: center; height: 12px; }
.frow label{ width: 20px; line-height: 8px; flex: none; color: #444; white-space: nowrap; }
.frow .free{ width: auto; color: #222; margin-left: 1px; }
.frow input[type=text],.field{ text-align: right; }
.frow .off{ background: #e6e6e6; color: #888; }
.frow .yel{ background: #ffffdc; }
.field{ line-height: 9px; }
mark{ background: #2a6fd0; color: #fff; }
.frow .sq{ margin-left: 2px; }
.frow .sq + input{ margin-left: 1px; }
.spin{
    width: 8px;
    height: 11px;
    border: 1px solid #b5b5b5;
    border-left: 0;
    background: url("data:image/svg+xml,%3Csvg xmlns='http://www.w3.org/2000/svg' width='7' height='9'%3E%3Cpath d='M0 4.500h7' stroke='%23bbb'/%3E%3Cpath d='M2 3h3L3.500 1zM2 6h3L3.500 8z' fill='%23555'/%3E%3C/svg%3E") #eee;
}
.chk .hook{ width: 8px; height: 4px; margin: 0 7px 4px 8px; border: solid #888; border-width: 0 0 1px 1px; }
.unit{ margin-left: auto; padding-right: 1px; }
.acts{ gap: 2px; height: 14px; }
.acts input[type=text],.acts button{ height: 12px; }
.acts button{ border: 0; width: 36px; white-space: nowrap; }
.fix{ background: #17936a; color: #fff; }
.cancel{ background: #f6dfb0; border: 1px solid #d8bd86 !important; }
.acts .submit{ width: 42px; background: #dc3a68; color: #fff; }

/* tabbed panels */
.panel{ display: flex; flex-direction: column; min-height: 0; }
.pending{ flex: 1; }
.watch{ height: 189px; }
.balance{ flex: 1; }
.tabs{ display: flex; flex: none; height: 12px; overflow: hidden; border-bottom: 1px solid #6b78a8; }
.tabs button{
    flex: none;
    padding: 0 4px;
    border: 1px solid #bcbcc0;
    border-width: 1px 1px 0 0;
    background: #dadadc;
    color: #777;
    white-space: nowrap;
}
.tabs .cur{ background: #f3f3f6; color: #111; border-color: #6b78a8; }
.pager{ display: flex; align-items: center; gap: 6px; margin-left: auto; padding: 0 4px; border: 1px solid #bbb; background: #f4f4f4; }
.filter{
    flex: none;
    display: flex;
    align-items: center;
    gap: 1px;
    height: 13px;
    padding: 0 1px;
    background: #ccd4e8;
    white-space: nowrap;
}
.radios{ display: flex; align-items: center; height: 11px; background: #f3f5fa; padding: 0 1px; margin-left: 1px; }
.cap{ margin: 0 2px 0 4px; }
.ask{ margin-left: 12px; }
.ghost{ color: #888; }
.grid-box{
    flex: 1;
    display: grid;
    grid-template-columns: 1fr 9px;
    grid-template-rows: 1fr 10px;
    margin: 2px 1px 0;
    border: 1px solid #a9acb5;
    background: #fdfdff;
    min-height: 0;
}
.grid-main{ overflow: hidden; min-width: 0; min-height: 0; }
.list{ width: 100%; table-layout: fixed; border-collapse: collapse; }
.list th,.list td{
    height: 11px;
    padding: 0 1px;
    line-height: 9px;
    border-right: 1px solid #c3c5cb;
    overflow: hidden;
    white-space: nowrap;
    text-align: left;
}
.list th{ height: 10px; background: #dbdfea; font-weight: normal; text-align: center; border-bottom: 1px solid #b5b8c0; padding: 0; }
.list tr td.num{ text-align: right; }
.list tr td.ctr{ text-align: center; padding: 0; }
.tall tbody tr:nth-child(even),.striped tbody tr:nth-child(even){ background: #e5e5e5; }
.list tr.hi{ background: #c8e8f1; }
.list input{ margin: 0 auto; }
.k12{ width: 12px; } .k13{ width: 14px; } .k17{ width: 17px; } .k18{ width: 19px; } .k25{ width: 25px; }
.k27{ width: 27px; } .k29{ width: 29px; } .k31{ width: 31px; } .k33{ width: 33px; } .k36{ width: 36px; }
.k39{ width: 39px; } .k40{ width: 40px; } .k43{ width: 43px; } .k51{ width: 51px; } .k73{ width: 73px; } .k86{ width: 86px; }

/* arrows and numbered steps over the window */
.marks{ position: absolute; left: 0; top: 0; width: 637px; height: 410px; pointer-events: none; }
.step{
    position: absolute;
    width: 13px;
    height: 13px;
    border: 1px solid #e02020;
    border-radius: 50%;
    color: #e02020;
    font-size: 10px;
    line-height: 11px;
    text-align: center;
}
.one{ left: 139px; top: 323px; }
.two{ left: 306px; top: 109px; }

/* bottom bars */
.bar{
    flex: none;
    display: flex;
    align-items: center;
    gap: 3px;
    padding-right: 3px;
    background: linear-gradient(#e8e8e8,#d6d6d6);
    border-top: 1px solid #f5f5f5;
    color: #444;
}
.opened{ height: 18px; gap: 4px; border-top: 2px solid #f5f5f5; }
.opened a{ display: flex; align-items: center; gap: 4px; height: 14px; padding: 0 4px 0 2px; }
.opened .on{ background: #cfcfcf; padding-left: 5px; }
.opened .tico + .tico{ margin-left: 5px; }
.tickers{ height: 17px; }
.tickers nav{ flex: 1; display: flex; overflow: hidden; }
.tickers a{
    flex: 1;
    height: 13px;
    margin-right: 2px;
    padding-left: 2px;
    border: 1px solid #c0c0c0;
    border-radius: 2px;
    background: #e4e4e4;
    font-family: "Liberation Mono", monospace;
    line-height: 11px;
}
.indices{ flex: none; display: flex; height: 27px; background: #c3c9d8; }
.index-grid{ flex: 1; display: grid; grid-template-columns: repeat(4,1fr); grid-template-rows: 13px 13px; gap: 1px 2px; background: #d8dce6; }
.idx{ display: flex; align-items: center; gap: 8px; padding-right: 5px; background: #bec6d7; }
.idx .name{ width: 45px; height: 13px; line-height: 13px; padding-left: 3px; background: #a9b2c8; color: #333; white-space: nowrap; }
.idx .short{ width: 21px; }
.idx .none{ width: 8px; padding: 0; }
.idx .caret{ margin-left: auto; outline: 2px solid #d9dde6; }
.idx.fall{ color: #2626c8; }
.idx.far .mid{ margin-left: 18px; }
.signals{ width: 56px; padding: 0 2px; color: #333; }
.signals > *{ display: flex; align-items: center; gap: 5px; height: 13px; white-space: nowrap; }
```
